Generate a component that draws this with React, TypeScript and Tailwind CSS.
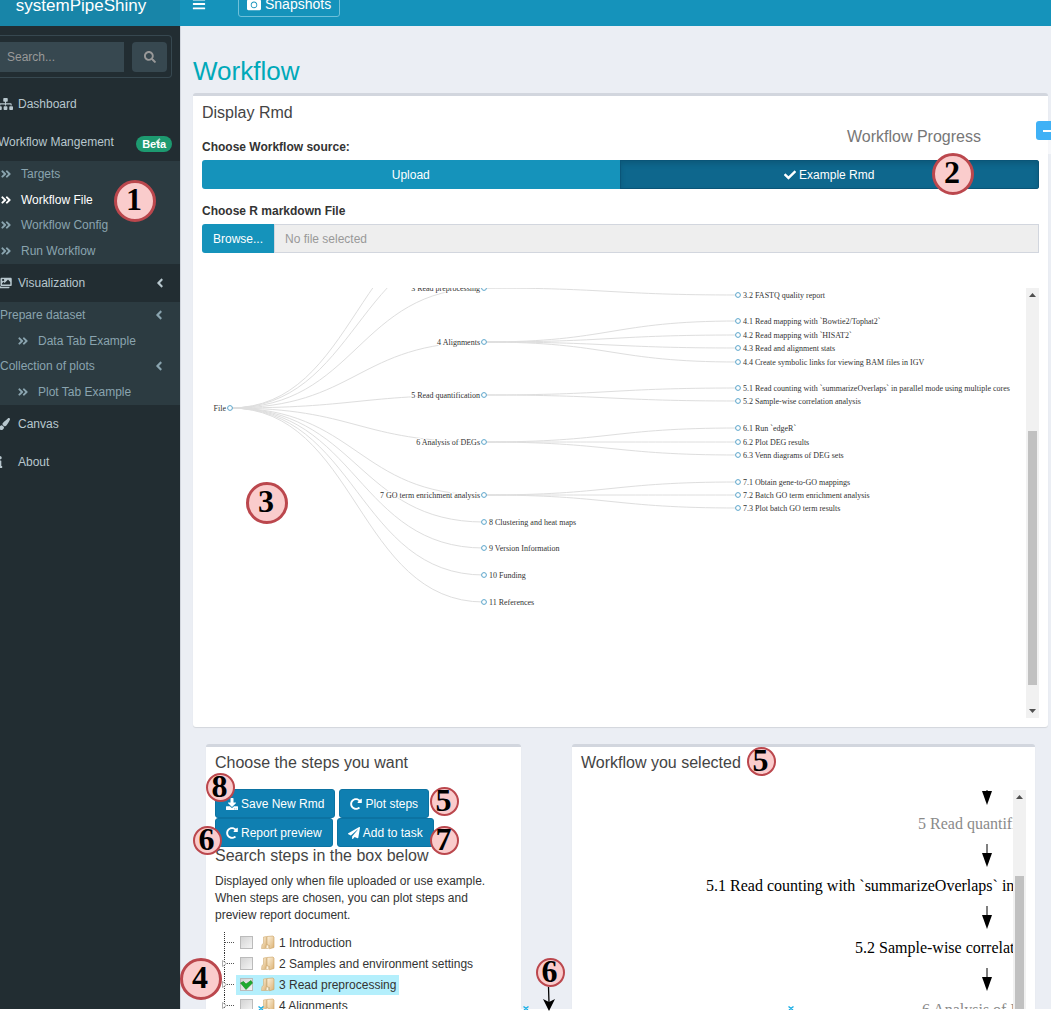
import React from "react";
import {
  FaAngleDoubleRight,
  FaAngleLeft,
  FaBars,
  FaCamera,
  FaCheck,
  FaDownload,
  FaImages,
  FaInfo,
  FaPaintBrush,
  FaPaperPlane,
  FaRedoAlt,
  FaSearch,
  FaSitemap,
} from "react-icons/fa";

const serif = "font-['Liberation_Serif',serif]";

/* ---------- Sidebar ---------- */

function MenuItem({ icon, label, extra }: { icon?: React.ReactNode; label: string; extra?: React.ReactNode }) {
  return (
    <a href="#" className="flex h-[38px] items-center pr-[13px] text-[#b8c7ce]">
      {icon && <span className="-ml-[2px] flex w-5 shrink-0">{icon}</span>}
      <span className={icon ? "" : "-ml-[2px]"}>{label}</span>
      {extra}
    </a>
  );
}

function SubMenu({ children }: { children: React.ReactNode }) {
  return <div className="flex h-[103px] flex-col bg-[#2c3b41]">{children}</div>;
}

function SubItem({ label, active, nested }: { label: string; active?: boolean; nested?: boolean }) {
  return (
    <a
      href="#"
      className={`flex flex-1 items-center ${nested ? "pl-[17px]" : ""} ${active ? "text-white" : "text-[#8aa4af]"}`}
    >
      <FaAngleDoubleRight className="mr-[9px] size-3" />
      {label}
    </a>
  );
}

function GroupItem({ label }: { label: string }) {
  return (
    <a href="#" className="flex flex-1 items-center justify-between pr-[14px] text-[#8aa4af]">
      {label}
      <FaAngleLeft className="size-3.5" />
    </a>
  );
}

function Sidebar() {
  return (
    <aside className="w-[180px] shrink-0 bg-[#222d32]">
      <form className="mt-[9px] mr-2 flex h-[43px] items-center justify-between rounded-r border border-l-0 border-[#374850] pr-1">
        <input
          aria-label="Search"
          placeholder="Search..."
          className="h-[30px] w-[124px] bg-[#374850] pl-[7px] text-white placeholder:text-[#999]"
        />
        <button type="button" aria-label="Search" className="flex h-[30px] w-[35px] items-center justify-center rounded-sm bg-[#374850] text-[#999]">
          <FaSearch className="size-3" />
        </button>
      </form>
      <nav className="mt-[7px]">
        <MenuItem icon={<FaSitemap className="h-3 w-[15px]" />} label="Dashboard" />
        <MenuItem
          label="Workflow Mangement"
          extra={
            <span className="relative mt-1 -mr-[5px] ml-auto flex h-4 items-center rounded-full bg-[#1d9a70] px-[6px] text-[11px] font-bold text-white">
              Beta
              <FaAngleLeft className="absolute top-0 right-2 size-3 opacity-60" />
            </span>
          }
        />
        <SubMenu>
          <SubItem label="Targets" />
          <SubItem label="Workflow File" active />
          <SubItem label="Workflow Config" />
          <SubItem label="Run Workflow" />
        </SubMenu>
        <MenuItem
          icon={<FaImages className="h-3 w-[14px]" />}
          label="Visualization"
          extra={<FaAngleLeft className="ml-auto size-3.5" />}
        />
        <SubMenu>
          <GroupItem label="Prepare dataset" />
          <SubItem label="Data Tab Example" nested />
          <GroupItem label="Collection of plots" />
          <SubItem label="Plot Tab Example" nested />
        </SubMenu>
        <MenuItem icon={<FaPaintBrush className="size-3" />} label="Canvas" />
        <MenuItem icon={<FaInfo className="-ml-[4px] size-3" />} label="About" />
      </nav>
    </aside>
  );
}

/* ---------- Workflow tree ---------- */

type Leaf = { label: string; y: number };
type Branch = { label: string; y: number; children?: Leaf[] };

const ROOT = { x: 28, y: 120 };
const X1 = 282;
const X2 = 536;

const branches: Branch[] = [
  { label: "1 Introduction", y: -73 },
  { label: "2 Samples and environment settings", y: -46 },
  {
    label: "3 Read preprocessing",
    y: 0,
    children: [
      { label: "3.1 Read quality filtering and trimming", y: -7 },
      { label: "3.2 FASTQ quality report", y: 7 },
    ],
  },
  {
    label: "4 Alignments",
    y: 54,
    children: [
      { label: "4.1 Read mapping with `Bowtie2/Tophat2`", y: 33 },
      { label: "4.2 Read mapping with `HISAT2`", y: 47 },
      { label: "4.3 Read and alignment stats", y: 60 },
      { label: "4.4 Create symbolic links for viewing BAM files in IGV", y: 74 },
    ],
  },
  {
    label: "5 Read quantification",
    y: 107,
    children: [
      { label: "5.1 Read counting with `summarizeOverlaps` in parallel mode using multiple cores", y: 100 },
      { label: "5.2 Sample-wise correlation analysis", y: 113 },
    ],
  },
  {
    label: "6 Analysis of DEGs",
    y: 154,
    children: [
      { label: "6.1 Run `edgeR`", y: 140 },
      { label: "6.2 Plot DEG results", y: 154 },
      { label: "6.3 Venn diagrams of DEG sets", y: 167 },
    ],
  },
  {
    label: "7 GO term enrichment analysis",
    y: 207,
    children: [
      { label: "7.1 Obtain gene-to-GO mappings", y: 194 },
      { label: "7.2 Batch GO term enrichment analysis", y: 207 },
      { label: "7.3 Plot batch GO term results", y: 220 },
    ],
  },
  { label: "8 Clustering and heat maps", y: 234 },
  { label: "9 Version Information", y: 260 },
  { label: "10 Funding", y: 287 },
  { label: "11 References", y: 314 },
];

function Link({ x1, y1, x2, y2 }: { x1: number; y1: number; x2: number; y2: number }) {
  const m = (x1 + x2) / 2;
  return <path d={`M${x1} ${y1}C${m} ${y1} ${m} ${y2} ${x2} ${y2}`} fill="none" stroke="#dedede" strokeWidth="1" />;
}

function Node({ x, y, label, left }: { x: number; y: number; label: string; left?: boolean }) {
  return (
    <g>
      <text
        x={left ? x - 4 : x + 5}
        y={y + 3}
        textAnchor={left ? "end" : "start"}
        fill="#333"
        stroke="#fff"
        strokeWidth="2"
        className="[paint-order:stroke]"
      >
        {label}
      </text>
      <circle cx={x} cy={y} r="2.4" fill="#fff" stroke="#5aa5cb" strokeWidth="1" />
    </g>
  );
}

function WorkflowTree() {
  return (
    <svg width="812" height="430" className={`shrink-0 text-[8px] ${serif}`} role="img" aria-label="Workflow tree">
      {branches.map((b) => (
        <g key={b.label}>
          <Link x1={ROOT.x} y1={ROOT.y} x2={X1} y2={b.y} />
          {b.children?.map((c) => <Link key={c.label} x1={X1} y1={b.y} x2={X2} y2={c.y} />)}
        </g>
      ))}
      <Node x={ROOT.x} y={ROOT.y} label="File" left />
      {branches
        .filter((b) => b.y >= 0)
        .map((b) => (
          <g key={b.label}>
            <Node x={X1} y={b.y} label={b.label} left={!!b.children} />
            {b.children?.filter((c) => c.y >= 0).map((c) => <Node key={c.label} x={X2} y={c.y} label={c.label} />)}
          </g>
        ))}
    </svg>
  );
}

function Scrollbar({ thumb, end }: { thumb: string; end?: boolean }) {
  return (
    <div className="flex w-[13px] shrink-0 flex-col items-center bg-[#f1f1f1]">
      <svg width="7" height="4" className="mt-[5px] shrink-0">
        <path d="M0 4L3.5 0L7 4Z" fill="#505050" />
      </svg>
      <div className={`w-[9px] shrink-0 bg-[#c1c1c1] ${thumb}`} />
      {end && (
        <svg width="7" height="4" className="mt-auto mb-[5px] shrink-0">
          <path d="M0 0L3.5 4L7 0Z" fill="#505050" />
        </svg>
      )}
    </div>
  );
}

/* ---------- Steps panel ---------- */

function ActionButton({ icon, children }: { icon: React.ReactNode; children: React.ReactNode }) {
  return (
    <button
      type="button"
      className="flex h-[29px] items-center gap-[3px] rounded-[3px] border border-[#0c73a2] bg-[#0f7fb1] px-2.5 text-white"
    >
      {icon}
      {children}
    </button>
  );
}

function FolderIcon() {
  return (
    <svg width="14" height="15" viewBox="0 0 14 15" className="shrink-0">
      <defs>
        <linearGradient id="folder" x1="0" y1="0" x2="1" y2="1">
          <stop offset="0" stopColor="#fdf3e0" />
          <stop offset="1" stopColor="#dcb273" />
        </linearGradient>
      </defs>
      <path d="M2.500 2L5.500 1.500V10L4.500 13.500H0.500L1 9.500L2.500 8.500Z" fill="url(#folder)" stroke="#d0ac74" strokeWidth="0.6" />
      <path d="M6 1.500L12 1L13 2V12.500L8.500 13.800V10.500L6 10Z" fill="url(#folder)" stroke="#c99f60" strokeWidth="0.6" />
      <path d="M5.500 9.500L7.500 10.500V13.500L5 13.500Z" fill="#fdf3e0" stroke="#c99f60" strokeWidth="0.5" />
    </svg>
  );
}

function StepRow({ label, checked, branch }: { label: string; checked?: boolean; branch?: boolean }) {
  return (
    <li className="flex h-[21px] items-center">
      <svg width="16" height="21" className="shrink-0">
        <path d="M4.500 0V21" stroke="#333" strokeDasharray="1 1" />
        <path d="M5 10.500H15" stroke="#555" strokeDasharray="1 1" />
        {branch && <path d="M2.500 7.500L6.500 10.500L2.500 13.500Z" fill="#fff" stroke="#999" strokeWidth="0.8" />}
      </svg>
      <label className={`flex h-5 items-center pr-[3px] pl-1 ${checked ? "bg-[#b4effc]" : ""}`}>
        <span className="relative mr-2 flex">
          <input
            type="checkbox"
            defaultChecked={checked}
            className="size-[13px] appearance-none border border-[#bbb] bg-linear-to-br from-[#d4d4d4] to-[#f4f4f4]"
          />
          {checked && (
            <svg width="13" height="13" viewBox="0 0 13 13" className="absolute top-0 left-0">
              <path d="M0.500 5L3.500 3.500L6 6L11 2.500L12.500 5L6 11.500Z" fill="#1faa2e" stroke="#148a20" strokeWidth="0.6" />
            </svg>
          )}
        </span>
        <FolderIcon />
        <span className="ml-1">{label}</span>
      </label>
    </li>
  );
}

/* ---------- Selected workflow ---------- */

const flow = [
  { label: "5 Read quantification", x: 337, y: 39, muted: true },
  { label: "5.1 Read counting with `summarizeOverlaps` in parallel mode using multiple cores", x: 125, y: 101 },
  { label: "5.2 Sample-wise correlation analysis", x: 274, y: 163 },
  { label: "6 Analysis of DEGs", x: 341, y: 225, muted: true },
];

function FlowDiagram() {
  return (
    <svg width="432" height="240" className={`shrink-0 text-base ${serif}`} role="img" aria-label="Selected steps">
      {flow.map((n) => (
        <g key={n.label}>
          <path d={`M406 ${n.y - 47}V${n.y - 37}`} stroke="#000" />
          <path d={`M401 ${n.y - 38}H411L406 ${n.y - 24}Z`} fill="#000" />
          <text x={n.x} y={n.y} fill={n.muted ? "#8a8a8a" : "#000"}>
            {n.label}
          </text>
        </g>
      ))}
    </svg>
  );
}

/* ---------- Annotations ---------- */

function Marker({ n, at, small }: { n: number; at: string; small?: boolean }) {
  return (
    <span
      className={`absolute flex items-center justify-center rounded-full border-[#bb474d] bg-[#facccc] pr-[2px] pb-1 text-[32px] leading-none font-bold text-black ${serif} ${
        small ? "size-[29px] border-2" : "size-[42px] border-[3px]"
      } ${at}`}
    >
      {n}
    </span>
  );
}

function Cross({ at }: { at: string }) {
  return (
    <svg width="6" height="4" className={`absolute ${at}`}>
      <path d="M0.500 0.500L5 4M5.500 0.500L1 4" stroke="#1fb0e6" strokeWidth="1.4" />
    </svg>
  );
}

const panel = "border-t-[3px] border-[#d2d6de] bg-white shadow-[0_1px_1px_rgba(0,0,0,0.1)]";
const heading = "text-base leading-[18px] text-[#444]";

export default function App() {
  return (
    <div className="relative flex h-screen flex-col overflow-hidden bg-[#ebeef4] font-['Liberation_Sans',Arial,sans-serif] text-xs text-[#333]">
      <header className="-mt-[18px] flex h-11 shrink-0 items-center bg-[#1593bb] text-white">
        <a href="#" className="flex h-full w-[180px] items-center justify-center bg-[#1885a8] pt-1 pr-[18px] text-[17px]">
          systemPipeShiny
        </a>
        <button type="button" aria-label="Toggle navigation" className="ml-[12px]">
          <FaBars className="size-3.5" />
        </button>
        <button type="button" className="ml-[32px] flex h-[26px] items-center gap-1 rounded-[3px] border border-[#6fc0d9] px-2 text-sm">
          <FaCamera className="size-3.5" />
          Snapshots
        </button>
      </header>

      <div className="flex min-h-0 flex-1 overflow-hidden">
        <Sidebar />
        <main className="min-w-0 flex-1 border-l border-[#d2d6de] pr-[3px] pl-3">
          <h1 className="mt-[27px] text-[26px] leading-9 text-[#00a9b9]">Workflow</h1>

          <section className={`mt-1 rounded-[3px] px-[9px] pb-[9px] ${panel}`}>
            <h2 className={`pt-2 ${heading}`}>Display Rmd</h2>
            <p className="mt-4 leading-[18px] font-bold">Choose Workflow source:</p>
            <div className="mt-1 flex h-[29px] overflow-hidden rounded-[3px] text-white">
              <button type="button" className="flex-1 bg-[#1593bb]">Upload</button>
              <button type="button" className="flex flex-1 items-center justify-center gap-[3px] border border-[#0a5578] bg-[#0e678d] shadow-[inset_0_3px_5px_rgba(0,0,0,0.125)]">
                <FaCheck className="size-3" />
                Example Rmd
              </button>
            </div>
            <label htmlFor="rmd-name" className="mt-[13px] block leading-[18px] font-bold">
              Choose R markdown File
            </label>
            <div className="mt-1 flex h-[29px]">
              <button type="button" className="w-[72px] rounded-l-[3px] bg-[#1593bb] text-white">Browse...</button>
              <input
                id="rmd-name"
                readOnly
                placeholder="No file selected"
                className="min-w-0 flex-1 border border-[#d2d6de] bg-[#eee] px-2.5 placeholder:text-[#999]"
              />
            </div>
            <div className="mt-[35px] flex h-[430px] justify-between overflow-hidden">
              <WorkflowTree />
              <Scrollbar thumb="mt-[134px] h-[254px]" end />
            </div>
          </section>

          <div className="mt-[17px] grid grid-cols-[315fr_463fr] gap-[51px] px-[13px]">
            <section className={`rounded-t-[3px] px-[9px] pb-5 ${panel}`}>
              <h2 className={`pt-[7px] ${heading}`}>Choose the steps you want</h2>
              <div className="mt-[17px] flex flex-wrap gap-x-1">
                <ActionButton icon={<FaDownload className="size-3" />}>Save New Rmd</ActionButton>
                <ActionButton icon={<FaRedoAlt className="size-3" />}>Plot steps</ActionButton>
                <ActionButton icon={<FaRedoAlt className="size-3" />}>Report preview</ActionButton>
                <ActionButton icon={<FaPaperPlane className="size-3" />}>Add to task</ActionButton>
              </div>
              <h2 className={heading}>Search steps in the box below</h2>
              <p className="mt-2 leading-[17px]">
                Displayed only when file uploaded or use example. When steps are chosen, you can plot steps and preview
                report document.
              </p>
              <ul className="mt-2 pl-[5px]">
                <StepRow label="1 Introduction" />
                <StepRow label="2 Samples and environment settings" branch />
                <StepRow label="3 Read preprocessing" branch checked />
                <StepRow label="4 Alignments" branch />
              </ul>
            </section>

            <section className={`rounded-t-[3px] px-[9px] ${panel}`}>
              <h2 className={`pt-[7px] ${heading}`}>Workflow you selected</h2>
              <div className="mt-[18px] flex h-[240px] justify-between overflow-hidden">
                <FlowDiagram />
                <Scrollbar thumb="mt-[77px] h-[200px]" />
              </div>
            </section>
          </div>
        </main>
      </div>
      <div className="h-[2px] shrink-0 bg-white" />

      <div className="absolute top-[121px] right-0 flex h-[33px] w-[225px] rounded-l bg-white/60">
        <span className="ml-[21px] flex-1 text-base leading-8 text-[#777]">Workflow Progress</span>
        <button type="button" aria-label="Collapse progress" className="flex h-[19px] w-[15px] items-center justify-end rounded-l-[3px] bg-[#3fb1f6]">
          <span className="h-[2px] w-2 bg-white" />
        </button>
      </div>

      <Marker n={1} at="top-[180px] left-[114px]" />
      <Marker n={2} at="top-[153px] left-[932px]" />
      <Marker n={3} at="top-[482px] left-[246px]" />
      <Marker n={4} at="top-[958px] left-[180px]" />
      <Marker n={8} at="top-[773px] left-[206px]" small />
      <Marker n={5} at="top-[787px] left-[430px]" small />
      <Marker n={6} at="top-[826px] left-[193px]" small />
      <Marker n={7} at="top-[826px] left-[430px]" small />
      <Marker n={5} at="top-[747px] left-[747px]" small />
      <Marker n={6} at="top-[958px] left-[536px]" small />
      <svg width="14" height="24" className="absolute top-[987px] left-[542px]">
        <path d="M6.500 0L7 16" stroke="#000" strokeWidth="1.3" />
        <path d="M1 12L7 15L13 12L7 24Z" fill="#000" />
      </svg>
      <Cross at="bottom-px left-[258px]" />
      <Cross at="bottom-px left-[523px]" />
      <Cross at="bottom-px left-[788px]" />
    </div>
  );
}
